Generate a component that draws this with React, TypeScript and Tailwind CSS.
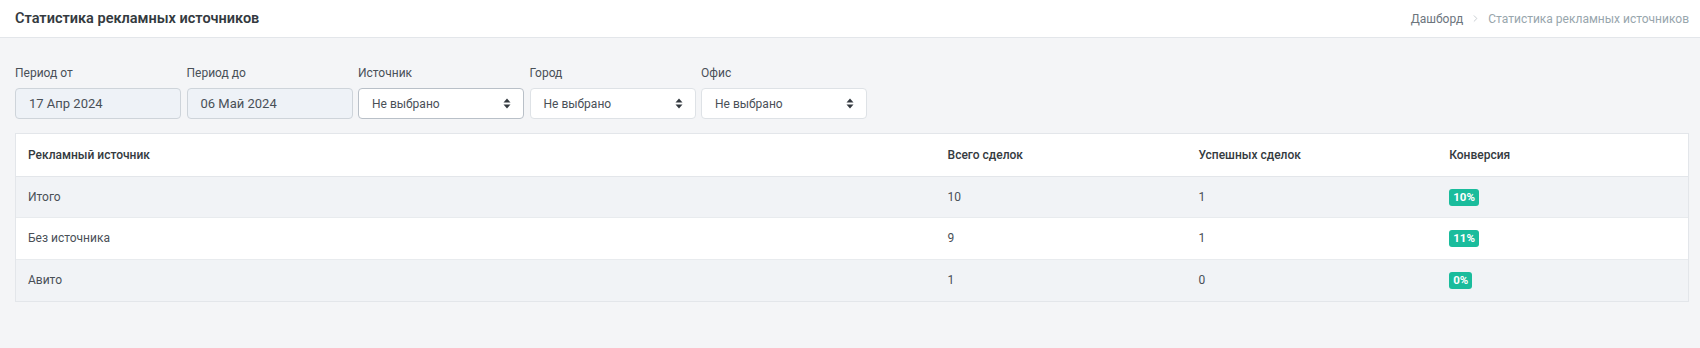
import { ChevronRight } from "lucide-react";

const font = { fontFamily: "Roboto, 'Noto Sans', sans-serif" };

interface Row {
  name: string;
  total: number;
  success: number;
  conv: string;
}

const rows: Row[] = [
  { name: "Итого", total: 10, success: 1, conv: "10%" },
  { name: "Без источника", total: 9, success: 1, conv: "11%" },
  { name: "Авито", total: 1, success: 0, conv: "0%" },
];

function SortArrows() {
  return (
    <svg width="8" height="11" viewBox="0 0 8 11" className="shrink-0">
      <path d="M4 0.5 L7.5 4.5 H0.5 Z" fill="#343a40" />
      <path d="M4 10.5 L7.5 6.5 H0.5 Z" fill="#343a40" />
    </svg>
  );
}

function DateField({ label, value }: { label: string; value: string }) {
  return (
    <div className="flex w-[166px] flex-col">
      <label className="mb-[5px] h-[20px] text-[12px] leading-[20px] text-[#495057]">{label}</label>
      <div className="flex h-[31px] items-center rounded-[4px] border border-[#ced4da] bg-[#eef2f7] px-[13px] text-[13px] text-[#495057]">
        {value}
      </div>
    </div>
  );
}

function SelectField({ label, active }: { label: string; active?: boolean }) {
  return (
    <div className="flex w-[166px] flex-col">
      <label className="mb-[5px] h-[20px] text-[12px] leading-[20px] text-[#495057]">{label}</label>
      <div
        className={
          active
            ? "flex h-[31px] items-center justify-between rounded-[4px] border border-[#b9c0c8] bg-white pl-[13px] pr-[12px] text-[12px] text-[#495057]"
            : "flex h-[31px] items-center justify-between rounded-[4px] border border-[#dee2e6] bg-white pl-[13px] pr-[12px] text-[12px] text-[#495057]"
        }
      >
        <span>Не выбрано</span>
        <SortArrows />
      </div>
    </div>
  );
}

export default function App() {
  return (
    <div className="min-h-[348px] w-full bg-[#f4f5f7]" style={font}>
      <header className="flex h-[38px] items-center justify-between border-b border-[#e3e6ea] bg-white pl-[15px] pr-[11px]">
        <h4 className="text-[14.5px] font-semibold text-[#343a40]">Статистика рекламных источников</h4>
        <nav className="flex items-center text-[12px]">
          <span className="text-[#6c757d]">Дашборд</span>
          <ChevronRight className="mx-[7px] h-[11px] w-[11px] text-[#c4c9ce]" />
          <span className="text-[#98a6ad]">Статистика рекламных источников</span>
        </nav>
      </header>

      <main className="pl-[15px] pr-[11px] pt-[25px]">
        <div className="flex gap-[5.5px]">
          <DateField label="Период от" value="17 Апр 2024" />
          <DateField label="Период до" value="06 Май 2024" />
          <SelectField label="Источник" active />
          <SelectField label="Город" />
          <SelectField label="Офис" />
        </div>

        <div className="mt-[14px] border border-[#e3e6ea] bg-white">
          <table className="w-full table-fixed border-collapse text-[12px]">
            <colgroup>
              <col className="w-[55%]" />
              <col className="w-[15%]" />
              <col className="w-[15%]" />
              <col className="w-[15%]" />
            </colgroup>
            <thead>
              <tr className="h-[42px] border-b border-[#e3e6ea] text-left">
                <th className="px-[12px] font-medium text-[#343a40]">Рекламный источник</th>
                <th className="px-[12px] font-medium text-[#343a40]">Всего сделок</th>
                <th className="px-[12px] font-medium text-[#343a40]">Успешных сделок</th>
                <th className="px-[12px] font-medium text-[#343a40]">Конверсия</th>
              </tr>
            </thead>
            <tbody>
              {rows.map((r, i) => (
                <tr
                  key={r.name}
                  className={
                    i % 2 === 0
                      ? "h-[41.5px] border-b border-[#e8ebee] bg-[#f1f3f6] last:border-b-0"
                      : "h-[41.5px] border-b border-[#e8ebee] bg-white last:border-b-0"
                  }
                >
                  <td className="px-[12px] text-[#495057]">{r.name}</td>
                  <td className="px-[12px] text-[#495057]">{r.total}</td>
                  <td className="px-[12px] text-[#495057]">{r.success}</td>
                  <td className="px-[12px]">
                    <span className="inline-block rounded-[3px] bg-[#1abc9c] px-[4px] py-[2px] text-[11.5px] font-bold leading-[13px] text-white">
                      {r.conv}
                    </span>
                  </td>
                </tr>
              ))}
            </tbody>
          </table>
        </div>
      </main>
    </div>
  );
}
